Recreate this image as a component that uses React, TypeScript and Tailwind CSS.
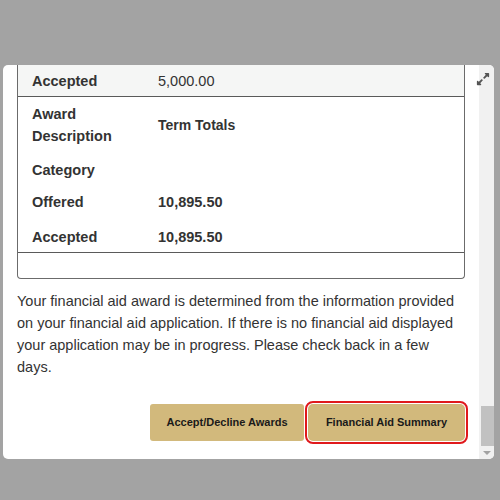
import { FaExpandAlt } from 'react-icons/fa';

const font = { fontFamily: '"Liberation Sans", Arial, sans-serif' };

function Row({ label, value, bold }: { label: React.ReactNode; value?: string; bold?: boolean }) {
  return (
    <div className="flex items-center">
      <div className="w-[140px] pl-[14px] font-bold text-[14.5px] leading-[22px] text-[#333]">{label}</div>
      <div className={`text-[14.5px] leading-[22px] text-[#333] ${bold ? 'font-bold' : ''}`}>{value}</div>
    </div>
  );
}

export default function App() {
  return (
    <div className="w-[500px] h-[500px] bg-[#a3a3a3] overflow-hidden pt-[65px] pl-[3px]" style={font}>
      <div className="relative w-[491px] h-[394px] bg-white rounded-[5px] overflow-hidden flex">
        <div className="flex-1 px-[14px]">
          <div className="border-x border-b border-[#6b6b6b] rounded-b-[4px]">
            <div className="h-[32px] bg-[#f5f6f5] border-b border-[#5a5a5a] flex items-center">
              <Row label="Accepted" value="5,000.00" />
            </div>
            <div className="pt-[6px]">
              <div className="flex items-center h-[44px]">
                <div className="w-[140px] pl-[14px] font-bold text-[14.5px] leading-[22px] text-[#333]">
                  Award
                  <br />
                  Description
                </div>
                <div className="font-bold text-[14px] text-[#333]">Term Totals</div>
              </div>
              <div className="mt-[12px] h-[22px] flex items-center">
                <Row label="Category" />
              </div>
              <div className="mt-[10px] h-[22px] flex items-center">
                <Row label="Offered" value="10,895.50" bold />
              </div>
              <div className="mt-[13px] h-[22px] flex items-center">
                <Row label="Accepted" value="10,895.50" bold />
              </div>
            </div>
            <div className="mt-[4px] border-t border-[#5a5a5a] h-[26px]" />
          </div>
          <p className="mt-[11px] text-[14.5px] leading-[22px] text-[#333] pr-[6px]">
            Your financial aid award is determined from the information provided on your financial aid application. If
            there is no financial aid displayed your application may be in progress. Please check back in a few days.
          </p>
          <div className="mt-[26px] flex justify-end gap-[4px]">
            <button className="w-[154px] h-[37px] rounded-[3px] bg-[#d2b97c] text-[11px] font-bold text-[#1a1a1a]">
              Accept/Decline Awards
            </button>
            <button className="w-[157px] h-[37px] rounded-[5px] bg-[#d2b97c] text-[11px] font-bold text-[#1a1a1a] outline-2 outline-offset-[1px] outline-[#e0191c]">
              Financial Aid Summary
            </button>
          </div>
        </div>
        <div className="w-[15px] bg-[#f1f1f1] relative">
          <div className="absolute left-[2px] right-0 top-[341px] h-[40px] bg-[#c1c1c1]" />
          <div className="absolute left-[4px] top-[386px] w-0 h-0 border-x-[4px] border-x-transparent border-t-[4px] border-t-[#a3a3a3]" />
        </div>
        <FaExpandAlt className="absolute right-[4px] top-[7px] text-[#555] w-[14px] h-[14px]" />
      </div>
    </div>
  );
}
